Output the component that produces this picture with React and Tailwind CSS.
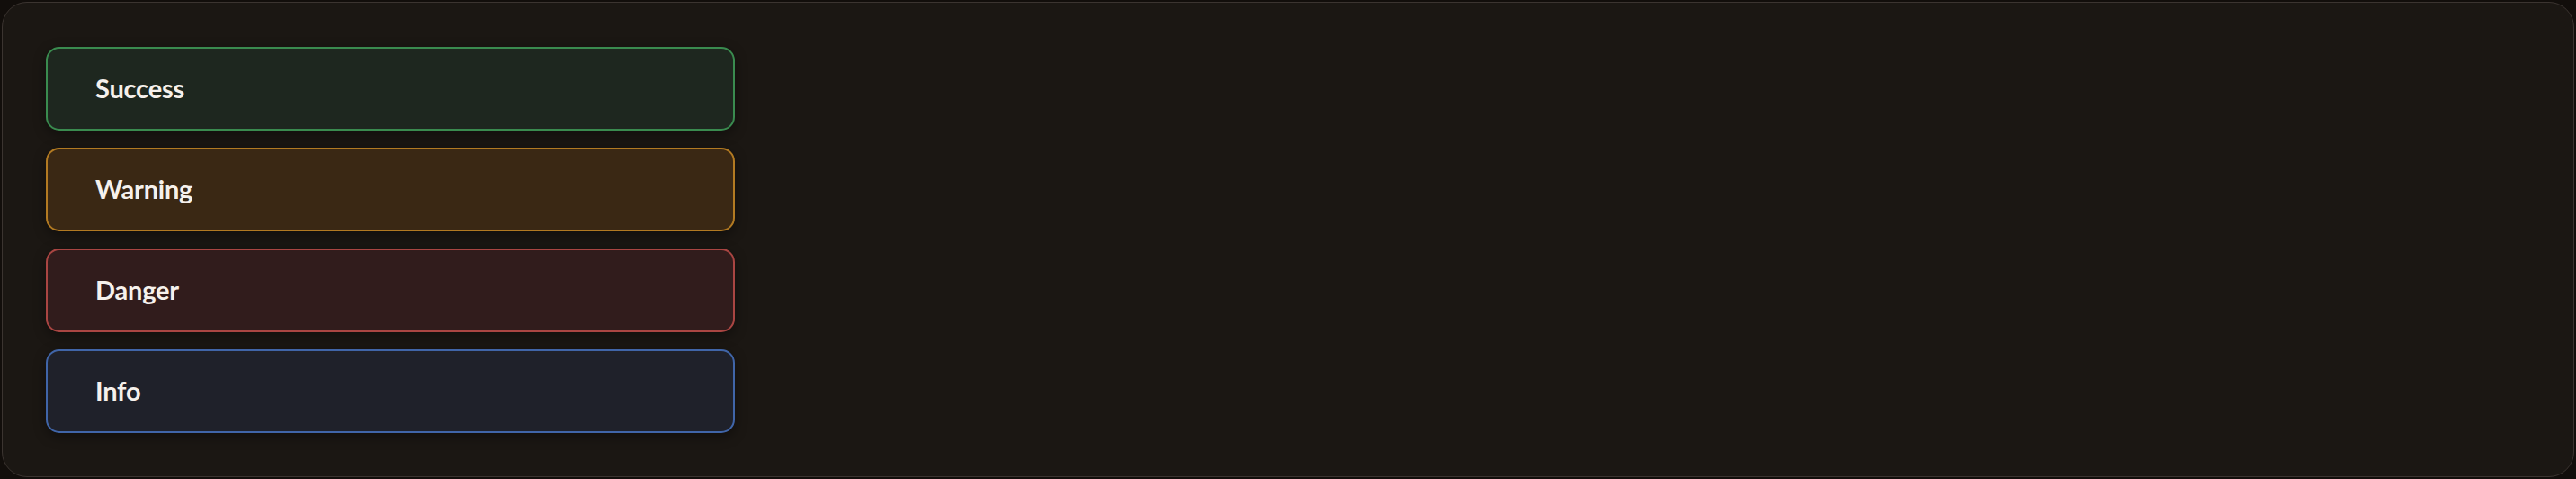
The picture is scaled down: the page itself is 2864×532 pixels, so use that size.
const alerts = [
  { label: "Success", box: "bg-[#1e271f] border-[#3a8b4f]" },
  { label: "Warning", box: "bg-[#3a2814] border-[#b27a22]" },
  { label: "Danger", box: "bg-[#311c1c] border-[#a94542]" },
  { label: "Info", box: "bg-[#1f212a] border-[#4065a8]" },
];

export default function App() {
  return (
    <div className="h-[532px] w-full bg-[#120e0b] p-[2px]" style={{ fontFamily: "Lato, 'Noto Sans', sans-serif" }}>
      <div className="h-full rounded-[28px] border border-[#3b3430] bg-[#1b1713] px-[48px] pt-[49px]">
        <div className="flex w-[766px] flex-col gap-[19px]">
          {alerts.map((a) => (
            <div
              key={a.label}
              className={`flex h-[93px] items-center rounded-[15px] border-2 pb-[3px] pl-[53px] shadow-[0_4px_14px_rgba(0,0,0,0.4)] ${a.box}`}
            >
              <span className="text-[29px] font-bold leading-none tracking-[-0.2px] text-[#f6f1ec]">{a.label}</span>
            </div>
          ))}
        </div>
      </div>
    </div>
  );
}
